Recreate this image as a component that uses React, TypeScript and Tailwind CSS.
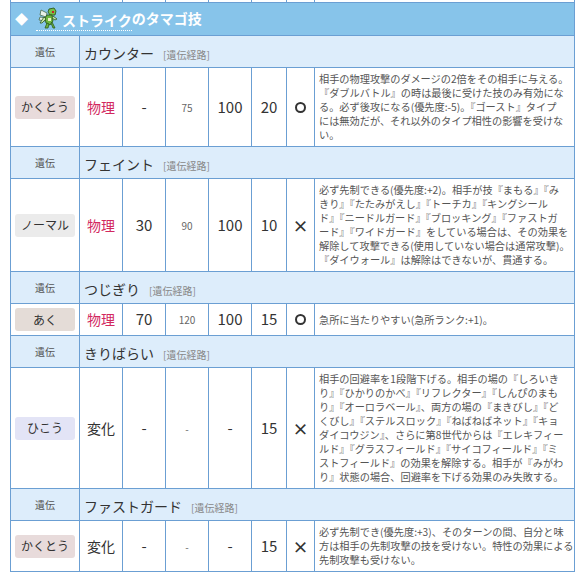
import React from "react";

type Move = {
  name: string;
  type: string;
  typeBg: string;
  category: "物理" | "変化";
  power: string;
  sub: string;
  accuracy: string;
  pp: string;
  contact: "○" | "×";
  desc: string[];
};

const moves: Move[] = [
  {
    name: "カウンター",
    type: "かくとう",
    typeBg: "bg-[#e8dbdb]",
    category: "物理",
    power: "-",
    sub: "75",
    accuracy: "100",
    pp: "20",
    contact: "○",
    desc: [
      "相手の物理攻撃のダメージの2倍をその相手に与える。",
      "『ダブルバトル』の時は最後に受けた技のみ有効にな",
      "る。必ず後攻になる(優先度:-5)。『ゴースト』タイプ",
      "には無効だが、それ以外のタイプ相性の影響を受けな",
      "い。",
    ],
  },
  {
    name: "フェイント",
    type: "ノーマル",
    typeBg: "bg-[#ebebeb]",
    category: "物理",
    power: "30",
    sub: "90",
    accuracy: "100",
    pp: "10",
    contact: "×",
    desc: [
      "必ず先制できる(優先度:+2)。相手が技『まもる』『み",
      "きり』『たたみがえし』『トーチカ』『キングシール",
      "ド』『ニードルガード』『ブロッキング』『ファストガ",
      "ード』『ワイドガード』をしている場合は、その効果を",
      "解除して攻撃できる(使用していない場合は通常攻撃)。",
      "『ダイウォール』は解除はできないが、貫通する。",
    ],
  },
  {
    name: "つじぎり",
    type: "あく",
    typeBg: "bg-[#e4dcd7]",
    category: "物理",
    power: "70",
    sub: "120",
    accuracy: "100",
    pp: "15",
    contact: "○",
    desc: ["急所に当たりやすい(急所ランク:+1)。"],
  },
  {
    name: "きりばらい",
    type: "ひこう",
    typeBg: "bg-[#e3e4f6]",
    category: "変化",
    power: "-",
    sub: "-",
    accuracy: "-",
    pp: "15",
    contact: "×",
    desc: [
      "相手の回避率を1段階下げる。相手の場の『しろいき",
      "り』『ひかりのかべ』『リフレクター』『しんぴのまも",
      "り』『オーロラベール』、両方の場の『まきびし』『ど",
      "くびし』『ステルスロック』『ねばねばネット』『キョ",
      "ダイコウジン』、さらに第8世代からは『エレキフィー",
      "ルド』『グラスフィールド』『サイコフィールド』『ミ",
      "ストフィールド』の効果を解除する。相手が『みがわ",
      "り』状態の場合、回避率を下げる効果のみ失敗する。",
    ],
  },
  {
    name: "ファストガード",
    type: "かくとう",
    typeBg: "bg-[#e8dbdb]",
    category: "変化",
    power: "-",
    sub: "-",
    accuracy: "-",
    pp: "15",
    contact: "×",
    desc: [
      "必ず先制でき(優先度:+3)、そのターンの間、自分と味",
      "方は相手の先制攻撃の技を受けない。特性の効果による",
      "先制攻撃も受けない。",
    ],
  },
];

function ScytherIcon() {
  return (
    <svg width="20" height="22" viewBox="0 0 20 22" className="shrink-0">
      <path d="M3 3 L9 6 L8 10 L2 8 Z" fill="#e8f0e8" stroke="#4a6a4a" strokeWidth="0.8" />
      <path d="M2 10 L8 11 L7 14 L1 13 Z" fill="#e8f0e8" stroke="#4a6a4a" strokeWidth="0.8" />
      <path d="M11 2 L16 1 L18 4 L17 8 L12 8 L10 5 Z" fill="#79c04a" stroke="#2d5a1d" strokeWidth="0.9" />
      <rect x="14" y="4" width="2" height="2" fill="#c8202a" />
      <path d="M9 8 L14 8 L15 14 L12 18 L8 16 L7 11 Z" fill="#6bb53e" stroke="#2d5a1d" strokeWidth="0.9" />
      <path d="M15 9 L19 12 L17 13 L14 11 Z" fill="#c9e6a8" stroke="#2d5a1d" strokeWidth="0.8" />
      <path d="M6 10 L2 16 L4 16 L8 12 Z" fill="#c9e6a8" stroke="#2d5a1d" strokeWidth="0.8" />
      <path d="M9 16 L7 21 L10 21 L11 17 Z" fill="#6bb53e" stroke="#2d5a1d" strokeWidth="0.8" />
      <path d="M13 16 L15 21 L17 21 L14 15 Z" fill="#6bb53e" stroke="#2d5a1d" strokeWidth="0.8" />
      <path d="M10 11 L13 11 L13 14 L10 14 Z" fill="#e9efc2" />
    </svg>
  );
}

const cell = "border border-[#6b9fd3] text-center align-middle px-0 py-[4px]";

function Contact({ mark }: { mark: "○" | "×" }) {
  if (mark === "○") {
    return (
      <span className="mx-auto block h-[11px] w-[11px] rounded-full border-[2px] border-[#333]" />
    );
  }
  return <span className="text-[16px] font-bold text-[#333]">×</span>;
}

function MoveRows({ m }: { m: Move }) {
  return (
    <>
      <tr className="h-[32px] bg-[#ddedfb]">
        <td className={`${cell} text-[10px] text-[#555]`}>遺伝</td>
        <td colSpan={7} className="border border-[#6b9fd3] pl-[4px] text-left align-middle">
          <span className="text-[14px] text-[#333]">{m.name}</span>
          <span className="ml-[9px] text-[10px] text-[#888]">[遺伝経路]</span>
        </td>
      </tr>
      <tr className="bg-white">
        <td className={cell}>
          <span
            className={`mx-auto flex h-[23px] w-[60px] items-center justify-center rounded-[3px] text-[12px] text-[#333] ${m.typeBg}`}
          >
            {m.type}
          </span>
        </td>
        <td
          className={`${cell} text-[14px] ${
            m.category === "物理" ? "text-[#d2285f]" : "text-[#333]"
          }`}
        >
          {m.category}
        </td>
        <td className={`${cell} text-[15px] text-[#333]`}>{m.power}</td>
        <td className={`${cell} text-[10px] text-[#666]`}>{m.sub}</td>
        <td className={`${cell} text-[15px] text-[#333]`}>{m.accuracy}</td>
        <td className={`${cell} text-[15px] text-[#333]`}>{m.pp}</td>
        <td className={cell}>
          <Contact mark={m.contact} />
        </td>
        <td className="border border-[#6b9fd3] px-[4px] py-[4px] text-left align-middle text-[10.2px] leading-[14px] text-[#555]">
          {m.desc.map((line, i) => (
            <span key={i} className="block whitespace-nowrap">
              {line}
            </span>
          ))}
        </td>
      </tr>
    </>
  );
}

export default function App() {
  return (
    <div className="h-[572px] w-[577px] overflow-hidden bg-white font-['Noto_Sans_CJK_JP','Noto_Sans',sans-serif]">
      <table className="ml-[10px] mt-[-1px] w-[565px] table-fixed border-collapse">
        <colgroup>
          <col className="w-[69px]" />
          <col className="w-[43px]" />
          <col className="w-[43px]" />
          <col className="w-[43px]" />
          <col className="w-[43px]" />
          <col className="w-[35px]" />
          <col className="w-[28px]" />
          <col />
        </colgroup>
        <tbody>
          <tr className="h-[3px]">
            {Array.from({ length: 8 }).map((_, i) => (
              <td key={i} className="border border-[#6b9fd3] p-0" />
            ))}
          </tr>
          <tr className="h-[33px] bg-[#87c4ea]">
            <th colSpan={8} className="border border-[#6b9fd3] p-0 text-left align-middle">
              <div className="flex items-center pl-[4px] text-[14px] font-bold text-white">
                <span className="text-[13px]">◆</span>
                <span className="ml-[8px] flex items-end border-b border-dotted border-white pl-[2px] pb-[1px]">
                  <ScytherIcon />
                  <span className="ml-[4px] leading-[18px]">ストライク</span>
                </span>
                <span className="mb-[2px] leading-[18px]">のタマゴ技</span>
              </div>
            </th>
          </tr>
          {moves.map((m) => (
            <MoveRows key={m.name} m={m} />
          ))}
        </tbody>
      </table>
    </div>
  );
}
